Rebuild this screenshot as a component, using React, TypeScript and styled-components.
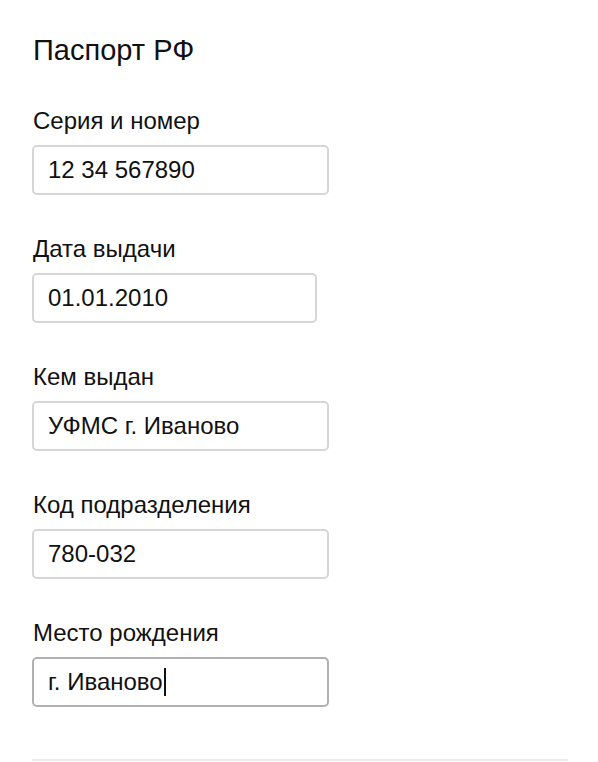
import React from "react";
import styled, { createGlobalStyle } from "styled-components";

const GlobalStyle = createGlobalStyle`
  html, body {
    margin: 0;
    padding: 0;
    background: #ffffff;
  }
  body {
    font-family: "Liberation Sans", Arial, Helvetica, sans-serif;
    color: #111111;
  }
`;

const Page = styled.div`
  padding: 34px 30px 0 32px;
`;

const Title = styled.h1`
  margin: 0 0 41px 1px;
  font-size: 29px;
  font-weight: 400;
  line-height: 32px;
`;

const Group = styled.div`
  margin-bottom: 40px;
`;

const Label = styled.div`
  margin: 0 0 10px 1px;
  font-size: 24px;
  line-height: 28px;
`;

const Field = styled.div<{ $width: number; $focused?: boolean }>`
  box-sizing: border-box;
  display: flex;
  align-items: center;
  width: ${(p) => p.$width}px;
  height: 50px;
  padding: 0 14px;
  border: 2.5px solid ${(p) => (p.$focused ? "#b0b0b0" : "#d6d6d6")};
  border-radius: 5px;
  background: #ffffff;
  font-size: 24px;
`;

const Value = styled.span`
  white-space: pre;
`;

const Caret = styled.span`
  display: inline-block;
  width: 2px;
  height: 28px;
  margin-left: 1px;
  background: #111111;
`;

const Divider = styled.hr`
  margin: 52px 0 0 0;
  border: none;
  border-top: 2px solid #ececec;
  width: 536px;
`;

type Item = { label: string; value: string; width: number; focused?: boolean };

const items: Item[] = [
  { label: "Серия и номер", value: "12 34 567890", width: 297 },
  { label: "Дата выдачи", value: "01.01.2010", width: 285 },
  { label: "Кем выдан", value: "УФМС г. Иваново", width: 297 },
  { label: "Код подразделения", value: "780-032", width: 297 },
  { label: "Место рождения", value: "г. Иваново", width: 297, focused: true },
];

function App() {
  return (
    <>
      <GlobalStyle />
      <Page>
        <Title>Паспорт РФ</Title>
        {items.map((it) => (
          <Group key={it.label}>
            <Label>{it.label}</Label>
            <Field $width={it.width} $focused={it.focused}>
              <Value>{it.value}</Value>
              {it.focused && <Caret />}
            </Field>
          </Group>
        ))}
        <Divider />
      </Page>
    </>
  );
}

export default App;
